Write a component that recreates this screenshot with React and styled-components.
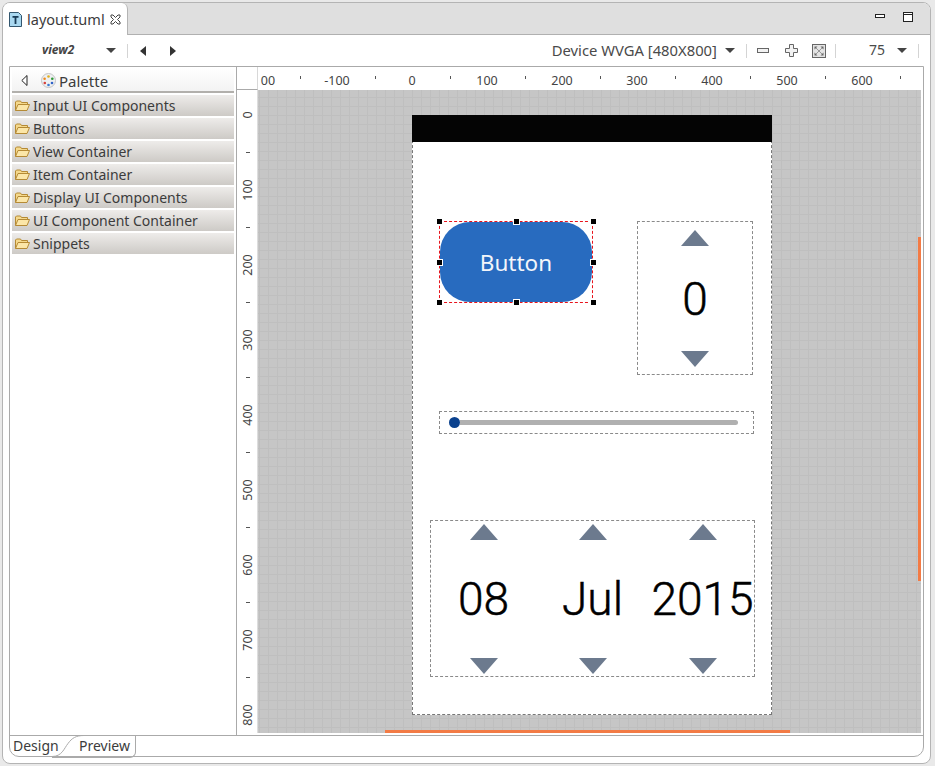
import React from 'react';
import styled, { createGlobalStyle } from 'styled-components';

const GlobalStyle = createGlobalStyle`
  html, body { margin: 0; padding: 0; background: #e9e9e9; }
  body { width: 935px; height: 766px; overflow: hidden; font-family: "Noto Sans", "Open Sans", sans-serif; }
`;

const Window = styled.div`
  box-sizing: border-box;
  width: 929px;
  height: 762px;
  margin: 2px 0 0 2px;
  border: 1px solid #b4b4b4;
  border-radius: 8px;
  background: #fff;
  display: flex;
  flex-direction: column;
  overflow: hidden;
`;

const TabStrip = styled.div`
  height: 32px;
  flex: none;
  display: flex;
  background: #dfdfdf;
  border-bottom: 1px solid #b0b0b0;
  box-sizing: border-box;
`;

const FileTab = styled.div`
  width: 125px;
  height: 32px;
  box-sizing: border-box;
  background: #fff;
  border-right: 1px solid #b4b4b4;
  border-radius: 0 6px 0 0;
  display: flex;
  align-items: center;
  padding-left: 6px;
  gap: 5px;
  font-size: 14.500px;
  color: #3c3c3c;
`;

const WindowButtons = styled.div`
  margin-left: auto;
  display: flex;
  align-items: center;
  gap: 18px;
  padding: 0 17px 4px 0;
`;

const Toolbar = styled.div`
  height: 31px;
  flex: none;
  display: flex;
  align-items: center;
  font-size: 14px;
  color: #4a4a4a;
`;

const ViewName = styled.span`
  font-size: 12px;
  font-weight: 700;
  font-style: italic;
  margin: 0 0 2px 39px;
  width: 64px;
  color: #444;
`;

const Arrow = styled.span`
  width: 0;
  height: 0;
  flex: none;
  margin-left: ${p => p.$gap || 0}px;
  border-left: 5px solid transparent;
  border-right: 5px solid transparent;
  border-top: 5px solid #444;
`;

const Sep = styled.span`
  width: 1px;
  height: 14px;
  flex: none;
  background: #d4d4d4;
  margin: ${p => p.$margin};
`;

const Gap = styled.span`
  flex: ${p => (p.$grow ? 1 : 'none')};
  width: ${p => p.$w || 0}px;
`;

const DeviceName = styled.span`
  font-size: 14.800px;
  white-space: nowrap;
  margin-bottom: 2px;
`;

const ZoomValue = styled.span`
  margin-bottom: 2px;
`;

const Main = styled.div`
  width: 915px;
  margin-left: 6px;
  height: 691px;
  flex: none;
  box-sizing: border-box;
  border: 1px solid #aaa;
  border-radius: 0 0 10px 10px;
  display: flex;
  flex-direction: column;
`;

const Editor = styled.div`
  height: 669px;
  flex: none;
  display: flex;
  border-bottom: 1px solid #aaa;
  box-sizing: border-box;
`;

const Palette = styled.div`
  width: 227px;
  flex: none;
  box-sizing: border-box;
  padding: 1px 2px 0 2px;
  border-right: 1px solid #aaa;
`;

const PaletteHead = styled.div`
  height: 25px;
  box-sizing: border-box;
  border-bottom: 2px solid #b2b0ac;
  display: flex;
  align-items: center;
  padding: 2px 0 0 9px;
  font-size: 15px;
  color: #3c3c3c;
  background: linear-gradient(#fff, #f3f3f3);
`;

const PaletteRow = styled.div`
  height: 21px;
  margin-top: 2px;
  display: flex;
  align-items: center;
  gap: 3px;
  padding-left: 3px;
  font-size: 14px;
  color: #3c3c3c;
  background: linear-gradient(#eeecea, #cdcac6);
`;

const Work = styled.div`
  flex: 1;
  display: grid;
  grid-template-columns: 21px 1fr;
  grid-template-rows: 23px 1fr;
  min-width: 0;
  padding-bottom: 2px;
`;

const Corner = styled.div`
  border-bottom: 1px solid #aaa;
  border-right: 1px solid #d8d8d8;
`;

const HRuler = styled.div`
  position: relative;
  overflow: hidden;
  background: #fff;
  font-size: 12.500px;
  color: #444;
`;

const HLabel = styled.span`
  position: absolute;
  top: 5px;
  left: ${p => p.$at}px;
  transform: translateX(-50%);
`;

const HTick = styled.span`
  position: absolute;
  top: 9px;
  left: ${p => p.$at}px;
  width: 1px;
  height: 3px;
  background: #555;
`;

const VRuler = styled.div`
  position: relative;
  overflow: hidden;
  background: #fff;
  border-right: 1px solid #ddd;
  font-size: 12.500px;
  color: #444;
`;

const VLabel = styled.span`
  position: absolute;
  left: 10px;
  top: ${p => p.$at}px;
  transform: translate(-50%, -50%) rotate(-90deg);
`;

const VTick = styled.span`
  position: absolute;
  left: 9px;
  top: ${p => p.$at}px;
  width: 4px;
  height: 1px;
  background: #555;
`;

const Canvas = styled.div`
  position: relative;
  overflow: hidden;
  background-color: #c6c6c6;
  background-image:
    linear-gradient(#bfbfbf 1px, transparent 1px),
    linear-gradient(90deg, #bfbfbf 1px, transparent 1px);
  background-size: 9px 9px;
  background-position: 1px 7px;
  margin-right: 2px;
`;

const Device = styled.div`
  position: absolute;
  left: 154px;
  top: 25px;
  width: 360px;
  height: 600px;
  box-sizing: border-box;
  background: #fff;
  border: 1px dashed #777;
  border-top: 0;
`;

const StatusBar = styled.div`
  position: absolute;
  left: -1px;
  right: -1px;
  top: 0;
  height: 27px;
  background: #040404;
`;

const ButtonWidget = styled.div`
  position: absolute;
  left: 26px;
  top: 106px;
  width: 154px;
  height: 82px;
  box-sizing: border-box;
  border: 1px dashed #e8141c;
`;

const ButtonFace = styled.div`
  width: 100%;
  height: 100%;
  border-radius: 30px;
  background: #286bbf;
  color: #f2f5fa;
  font-size: 22.500px;
  display: flex;
  align-items: center;
  justify-content: center;
`;

const Handle = styled.span`
  position: absolute;
  left: ${p => p.$x}px;
  top: ${p => p.$y}px;
  width: 5px;
  height: 5px;
  background: #000;
  outline: 1px solid #fff;
`;

const Spinner = styled.div`
  position: absolute;
  left: 224px;
  top: 106px;
  width: 116px;
  height: 154px;
  box-sizing: border-box;
  border: 1px dashed #8a8a8a;
  display: flex;
  flex-direction: column;
  align-items: center;
  justify-content: space-between;
  padding: 8px 0 7px;
`;

const Value = styled.div`
  font-family: Roboto, "Noto Sans", sans-serif;
  font-size: 46px;
  font-weight: 300;
  -webkit-text-stroke: 0.5px #000;
  line-height: 1;
  color: #000;
`;

const Up = styled.span`
  width: 0;
  height: 0;
  border-left: 14.500px solid transparent;
  border-right: 14.500px solid transparent;
  border-bottom: 16px solid #6c7a8e;
`;

const Down = styled.span`
  width: 0;
  height: 0;
  border-left: 14.500px solid transparent;
  border-right: 14.500px solid transparent;
  border-top: 16px solid #6c7a8e;
`;

const Slider = styled.div`
  position: absolute;
  left: 26px;
  top: 296px;
  width: 315px;
  height: 23px;
  box-sizing: border-box;
  border: 1px dashed #8a8a8a;
  display: flex;
  align-items: center;
  padding: 0 15px 0 9px;
`;

const Thumb = styled.span`
  width: 11px;
  height: 11px;
  flex: none;
  border-radius: 50%;
  background: #0a418e;
`;

const Track = styled.span`
  flex: 1;
  height: 5px;
  border-radius: 0 3px 3px 0;
  background: #b0b0b0;
`;

const DatePicker = styled.div`
  position: absolute;
  left: 17px;
  top: 405px;
  width: 325px;
  height: 157px;
  box-sizing: border-box;
  border: 1px dashed #8a8a8a;
  display: grid;
  grid-template-columns: 105px 113px 107px;
`;

const DateColumn = styled.div`
  display: flex;
  flex-direction: column;
  align-items: center;
  justify-content: space-between;
  padding: 3px 0 2px;
  white-space: nowrap;
`;

const VScroll = styled.div`
  position: absolute;
  right: 0;
  top: 147px;
  width: 3px;
  height: 344px;
  background: #f37b45;
`;

const HScroll = styled.div`
  position: absolute;
  left: 127px;
  bottom: 0;
  width: 405px;
  height: 3px;
  background: #f37b45;
`;

const BottomTabs = styled.div`
  flex: 1;
  display: flex;
  font-size: 14px;
  color: #3c3c3c;
`;

const DesignTab = styled.div`
  width: 39px;
  padding-left: 3px;
  line-height: 20px;
  white-space: nowrap;
  position: relative;
  z-index: 1;
`;

const PreviewTab = styled.div`
  width: 56px;
  height: 21px;
  padding-left: 27px;
  line-height: 20px;
  border-right: 1px solid #aaa;
  border-bottom: 1px solid #aaa;
  border-radius: 0 0 6px 0;
  position: relative;
`;

const TabCurve = styled.svg`
  position: absolute;
  left: 0;
  top: -1px;
`;

const CloseX = () => (
  <svg width="11" height="11" viewBox="0 0 11 11" fill="none" stroke="#444" strokeWidth="1">
    <path d="M1 1h2l2.500 2.500L8 1h2v2L7.500 5.500 10 8v2H8L5.500 7.500 3 10H1V8l2.500-2.500L1 3z" />
  </svg>
);

const FileIcon = () => (
  <svg width="13" height="15" viewBox="0 0 13 15">
    <path d="M.5.500h9l3 3v11H.5z" fill="#a9d8f0" stroke="#33566e" />
    <path d="M3.500 4h6v1.800H7.400V12H5.600V5.800H3.500z" fill="#173a55" />
  </svg>
);

const FolderIcon = () => (
  <svg width="15" height="12" viewBox="0 0 15 12">
    <path d="M.5 10.500V2L1.500 1h4l1 1.500h6V4" fill="#f5d98c" stroke="#b58a35" />
    <path d="M.5 10.500 3 4.500h11.500l-2.500 6z" fill="#fbe6a8" stroke="#b58a35" />
  </svg>
);

const PaletteIcon = () => (
  <svg width="15" height="15" viewBox="0 0 15 15">
    <circle cx="7.500" cy="7.500" r="7" fill="#eef0f2" stroke="#c4c4c4" />
    <circle cx="7.500" cy="3.500" r="1.300" fill="#e0b020" />
    <circle cx="11.300" cy="5.800" r="1.300" fill="#2f9a36" />
    <circle cx="11" cy="10" r="1.300" fill="#2f63c8" />
    <circle cx="7.500" cy="12" r="1.300" fill="#3a7ad0" />
    <circle cx="3.800" cy="10" r="1.300" fill="#d8403a" />
    <circle cx="3.600" cy="5.800" r="1.300" fill="#ee8a1c" />
  </svg>
);

const CollapseIcon = () => (
  <svg width="7" height="11" viewBox="0 0 7 11"><path d="M6 .5v10L.8 5.500z" fill="#fff" stroke="#222" /></svg>
);

const NavLeft = () => (
  <svg width="7" height="10" viewBox="0 0 7 10"><path d="M6 0v10L0 5z" fill="#333" /></svg>
);

const NavRight = () => (
  <svg width="7" height="10" viewBox="0 0 7 10"><path d="M1 0v10l6-5z" fill="#333" /></svg>
);

const Minimize = () => (
  <svg width="10" height="5" viewBox="0 0 10 5"><rect x=".5" y=".5" width="9" height="3" fill="#fff" stroke="#222" /></svg>
);

const Maximize = () => (
  <svg width="10" height="10" viewBox="0 0 10 10">
    <rect x=".5" y=".5" width="9" height="9" fill="#fff" stroke="#222" />
    <path d="M0 2.500h10" stroke="#222" />
  </svg>
);

const ZoomOut = () => (
  <svg width="12" height="6" viewBox="0 0 12 6"><rect x=".5" y=".5" width="11" height="4" fill="#f2f2f2" stroke="#666" /></svg>
);

const ZoomIn = () => (
  <svg width="13" height="13" viewBox="0 0 13 13">
    <path d="M4.500.500h4v4h4v4h-4v4h-4v-4h-4v-4h4z" fill="#f2f2f2" stroke="#666" />
  </svg>
);

const ZoomFit = () => (
  <svg width="14" height="14" viewBox="0 0 14 14" fill="none">
    <rect x=".5" y=".5" width="13" height="13" fill="#e4e4e4" stroke="#666" />
    <path d="M3 3l8 8M11 3l-8 8" stroke="#999" />
    <path d="M2.500 2.500h3l-3 3zM11.500 2.500h-3l3 3zM2.500 11.500h3l-3-3zM11.500 11.500h-3l3-3z" fill="#666" />
  </svg>
);

const PALETTE = [
  'Input UI Components',
  'Buttons',
  'View Container',
  'Item Container',
  'Display UI Components',
  'UI Component Container',
  'Snippets',
];

const H_LABELS = [
  ['00', 10], ['-100', 79], ['0', 154], ['100', 229], ['200', 304],
  ['300', 379], ['400', 454], ['500', 529], ['600', 604],
];
const H_TICKS = [42, 117, 192, 267, 342, 417, 492, 567, 642];

const V_LABELS = [
  ['0', 25], ['100', 100], ['200', 175], ['300', 250], ['400', 325],
  ['500', 400], ['600', 475], ['700', 550], ['800', 625],
];
const V_TICKS = [62, 137, 212, 287, 362, 437, 512, 587];

const HANDLES = [
  [-3, -3], [74, -3], [151, -3],
  [-3, 38], [151, 38],
  [-3, 78], [74, 78], [151, 78],
];

const DATE_PARTS = ['08', 'Jul', '2015'];

const App = () => {
  return (
    <>
      <GlobalStyle />
      <Window>
        <TabStrip>
          <FileTab>
            <FileIcon />
            layout.tuml
            <CloseX />
          </FileTab>
          <WindowButtons>
            <Minimize />
            <Maximize />
          </WindowButtons>
        </TabStrip>
        <Toolbar>
          <ViewName>view2</ViewName>
          <Arrow />
          <Sep $margin="0 12px 0 11px" />
          <NavLeft />
          <Gap $w={22} />
          <NavRight />
          <Gap $grow />
          <DeviceName>Device WVGA [480X800]</DeviceName>
          <Arrow $gap={8} />
          <Sep $margin="0 10px 0 11px" />
          <ZoomOut />
          <Gap $w={16} />
          <ZoomIn />
          <Gap $w={14} />
          <ZoomFit />
          <Sep $margin="0 33px 0 9px" />
          <ZoomValue>75</ZoomValue>
          <Arrow $gap={12} />
          <Sep $margin="0 11px 0 11px" />
        </Toolbar>
        <Main>
          <Editor>
            <Palette>
              <PaletteHead>
                <CollapseIcon />
                <Gap $w={13} />
                <PaletteIcon />
                <Gap $w={3} />
                Palette
              </PaletteHead>
              {PALETTE.map(name => (
                <PaletteRow key={name}>
                  <FolderIcon />
                  {name}
                </PaletteRow>
              ))}
            </Palette>
            <Work>
              <Corner />
              <HRuler>
                {H_LABELS.map(([text, at]) => <HLabel key={text} $at={at}>{text}</HLabel>)}
                {H_TICKS.map(at => <HTick key={at} $at={at} />)}
              </HRuler>
              <VRuler>
                {V_LABELS.map(([text, at]) => <VLabel key={text} $at={at}>{text}</VLabel>)}
                {V_TICKS.map(at => <VTick key={at} $at={at} />)}
              </VRuler>
              <Canvas>
                <Device>
                  <StatusBar />
                  <ButtonWidget>
                    <ButtonFace>Button</ButtonFace>
                    {HANDLES.map(([x, y]) => <Handle key={`${x}-${y}`} $x={x} $y={y} />)}
                  </ButtonWidget>
                  <Spinner>
                    <Up />
                    <Value>0</Value>
                    <Down />
                  </Spinner>
                  <Slider>
                    <Thumb />
                    <Track />
                  </Slider>
                  <DatePicker>
                    {DATE_PARTS.map(part => (
                      <DateColumn key={part}>
                        <Up />
                        <Value>{part}</Value>
                        <Down />
                      </DateColumn>
                    ))}
                  </DatePicker>
                </Device>
                <VScroll />
                <HScroll />
              </Canvas>
            </Work>
          </Editor>
          <BottomTabs>
            <DesignTab>Design</DesignTab>
            <PreviewTab>
              <TabCurve width="32" height="22" viewBox="0 0 32 22" fill="none">
                <path d="M0 21.500c10 0 12-8 16-13C20 3 24 .5 32 .5" stroke="#aaa" />
              </TabCurve>
              Preview
            </PreviewTab>
          </BottomTabs>
        </Main>
      </Window>
    </>
  );
};

export default App;
